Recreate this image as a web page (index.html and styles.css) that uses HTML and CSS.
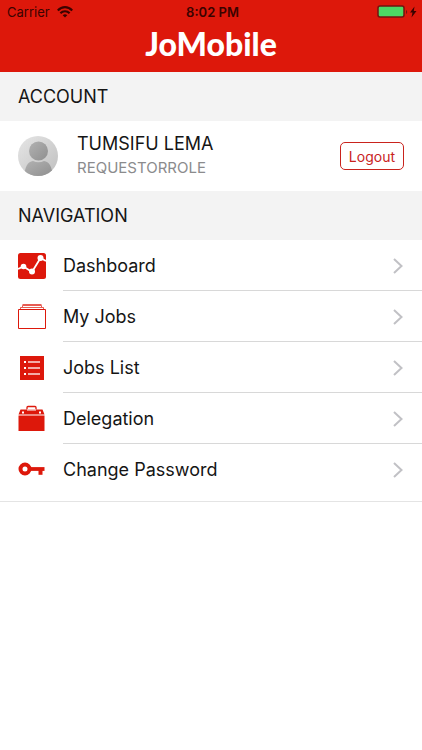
FILE: index.html
```html
<!DOCTYPE html>
<html lang="en">
 <head>
  <meta charset="utf-8">
  <meta name="viewport" content="width=device-width, initial-scale=1">
  <title>JoMobile</title>
  <link rel="stylesheet" href="styles.css">
 </head>
 <body>
  <!-- Status bar and app title -->
  <header class="header">
   <div class="status">
    <div class="status-left">
     <span>Carrier</span>
     <svg width="16" height="12" viewBox="0 0 16 12" fill="none" stroke="#3a0300" stroke-width="2.2">
      <path d="M.8 4.400C5 .1 11 .1 15.200 4.400"/>
      <path d="M3.400 7.200C6 4.600 10 4.600 12.600 7.200"/>
      <path d="M8 11.600L5.700 9.200C7 8 9 8 10.300 9.200Z" fill="#3a0300" stroke="none"/>
     </svg>
    </div>
    <div class="status-time">8:02 PM</div>
    <div class="status-right">
     <svg width="40" height="14" viewBox="0 0 40 14">
      <rect x="0" y="1" width="26" height="11" rx="2" fill="#4cd964" stroke="#721510" stroke-width="1.5"/>
      <path d="M28 5v4c1.600-.8 1.600-3.200 0-4z" fill="#721510"/>
      <path d="M36.500 1.500L32 7.500h2.500L33.500 12.500 38.500 6h-2.700z" fill="#3a0300"/>
     </svg>
    </div>
   </div>
   <h1 class="title">JoMobile</h1>
  </header>

  <main>
   <!-- Account -->
   <h2 class="section">ACCOUNT</h2>
   <div class="account">
    <svg class="avatar" width="40" height="40" viewBox="0 0 40 40">
     <defs>
      <linearGradient id="back" x1="0" y1="0" x2="1" y2="1">
       <stop offset="0" stop-color="#e6e6e6"/>
       <stop offset="1" stop-color="#bfbfbf"/>
      </linearGradient>
      <linearGradient id="person" x1="0" y1="0" x2="1" y2="1">
       <stop offset="0" stop-color="#b2b2b2"/>
       <stop offset="1" stop-color="#8f8f8f"/>
      </linearGradient>
      <clipPath id="round"><circle cx="20" cy="20" r="20"/></clipPath>
     </defs>
     <circle cx="20" cy="20" r="20" fill="url(#back)"/>
     <g clip-path="url(#round)" fill="url(#person)">
      <circle cx="20.500" cy="15" r="9.500"/>
      <path d="M6.500 40C6.500 31 10 25.500 15 25c3.500 1.600 7.500 1.600 11 0 5 .5 8.500 6 8.500 15z"/>
     </g>
    </svg>
    <div class="user">
     <div class="name">TUMSIFU LEMA</div>
     <div class="role">REQUESTORROLE</div>
    </div>
    <button class="logout" type="button">Logout</button>
   </div>

   <!-- Navigation -->
   <h2 class="section">NAVIGATION</h2>
   <nav class="menu">
    <a class="item" href="#dashboard">
     <svg class="icon" width="28" height="28" viewBox="0 0 28 28">
      <rect y="1" width="28" height="26" rx="2.500" fill="#dd180b"/>
      <path d="M0 17L5.500 14.500 14 20 22.500 6 28 9" fill="none" stroke="#fff" stroke-width="1.800"/>
      <g fill="#fff"><circle cx="5.500" cy="14.500" r="2.800"/><circle cx="14" cy="19.500" r="3"/><circle cx="22.500" cy="6" r="3"/></g>
     </svg>
     <span class="label">Dashboard</span>
     <svg class="arrow" width="10" height="16" viewBox="0 0 10 16"><path d="M1 1l7.500 7L1 15"/></svg>
    </a>
    <a class="item" href="#jobs">
     <svg class="icon" width="28" height="28" viewBox="0 0 28 28" fill="none" stroke="#dd180b">
      <path d="M.5 6.500h27v19H.5z"/>
      <path d="M2.500 6V4.500h23V6M4.500 4V2.500h19V4M4.500 1.500h19" stroke-opacity=".7"/>
     </svg>
     <span class="label">My Jobs</span>
     <svg class="arrow" width="10" height="16" viewBox="0 0 10 16"><path d="M1 1l7.500 7L1 15"/></svg>
    </a>
    <a class="item" href="#list">
     <svg class="icon" width="28" height="28" viewBox="0 0 28 28">
      <rect x="2" y="2" width="24" height="24" fill="#dd180b"/>
      <path d="M10 8h12M10 14h12M10 20h12" stroke="#fff" stroke-opacity=".85" stroke-width="1.300"/>
      <path d="M6 8h2M6 14h2M6 20h2" stroke="#fff" stroke-width="2"/>
     </svg>
     <span class="label">Jobs List</span>
     <svg class="arrow" width="10" height="16" viewBox="0 0 10 16"><path d="M1 1l7.500 7L1 15"/></svg>
    </a>
    <a class="item" href="#delegation">
     <svg class="icon" width="28" height="28" viewBox="0 0 28 28">
      <path d="M.5 10.500h26V26H.5zM.5 9.500l2-5h22l2 5z" fill="#dd180b"/>
      <path d="M9 4.500V2.500Q9 1.500 10 1.500h7q1 0 1 1v2" fill="none" stroke="#dd180b" stroke-width="1.300"/>
      <path d="M9 5h9" stroke="#fff" stroke-width="1"/>
      <path d="M4 7.500h2M21 7.500h2" stroke="#fff" stroke-width="2"/>
     </svg>
     <span class="label">Delegation</span>
     <svg class="arrow" width="10" height="16" viewBox="0 0 10 16"><path d="M1 1l7.500 7L1 15"/></svg>
    </a>
    <a class="item" href="#password">
     <svg class="icon" width="28" height="28" viewBox="0 0 28 28" fill="none" stroke="#dd180b">
      <circle cx="7" cy="13" r="4.500" stroke-width="4"/>
      <path d="M12 13h14.500" stroke-width="3.800"/>
      <path d="M22.500 13v5.800" stroke-width="4"/>
     </svg>
     <span class="label">Change Password</span>
     <svg class="arrow" width="10" height="16" viewBox="0 0 10 16"><path d="M1 1l7.500 7L1 15"/></svg>
    </a>
   </nav>
  </main>
 </body>
</html>
```
FILE: styles.css
```css
* {
 box-sizing: border-box;
}
body {
 margin: 0;
 font-family: Inter, "Liberation Sans", sans-serif;
 background-color: #fff;
 color: #151515;
}
/* Header */
.header {
 height: 72px;
 background-color: #dd180b;
}
.status {
 display: grid;
 grid-template-columns: 1fr auto 1fr;
 align-items: center;
 height: 24px;
 padding: 0 4px 0 7px;
 font-size: 13px;
 line-height: 24px;
 color: #3a0300;
}
.status-left {
 display: flex;
 align-items: center;
 gap: 7px;
}
.status-time {
 font-weight: 600;
}
.status-right {
 display: flex;
 justify-content: flex-end;
}
.status-right svg {
 overflow: visible;
}
.title {
 margin: 0;
 font-family: Lato, sans-serif;
 font-size: 32px;
 font-weight: 900;
 line-height: 40px;
 text-align: center;
 color: #fff;
}
/* Section headings */
.section {
 margin: 0;
 padding: 0 18px;
 background-color: #f3f3f3;
 font-size: 18px;
 font-weight: 400;
 line-height: 49px;
}
/* Account row */
.account {
 display: flex;
 align-items: center;
 gap: 19px;
 height: 70px;
 padding: 0 18px;
}
.user {
 flex: 1;
}
.name {
 font-size: 18px;
 line-height: 24px;
}
.role {
 font-size: 15px;
 line-height: 24px;
 color: #8b8b8d;
}
.logout {
 height: 28px;
 padding: 0 8px;
 border: 1px solid #c9231d;
 border-radius: 5px;
 background-color: #fff;
 color: #c9231d;
 font-family: inherit;
 font-size: 14px;
}
/* Navigation rows */
.menu {
 padding-bottom: 6px;
 border-bottom: 1px solid #e4e4e4;
}
.item {
 display: grid;
 grid-template-columns: 63px 1fr 29px;
 align-items: center;
 height: 51px;
 color: #151515;
 text-decoration: none;
}
.icon {
 margin-left: 18px;
}
.label {
 font-size: 18px;
}
.arrow {
 fill: none;
 stroke: #c1c1c5;
 stroke-width: 2;
}
/* The divider starts at the label, the last row has none */
.item:not(:last-child) {
 background: linear-gradient(#d8d8d8, #d8d8d8) 63px 100% / 100% 1px no-repeat;
}
```
